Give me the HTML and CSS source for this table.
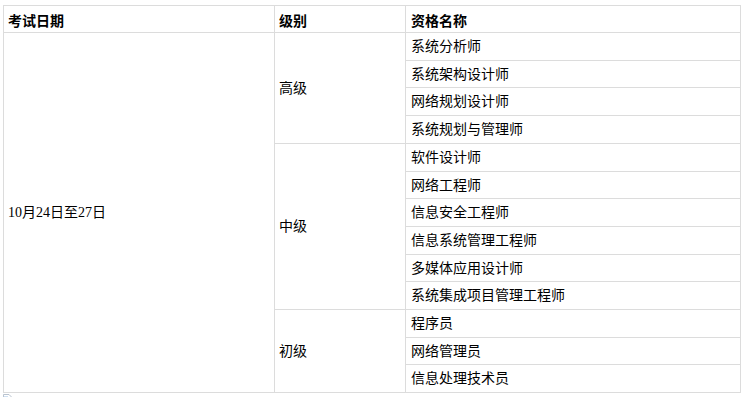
FILE: index.html
```html
<!DOCTYPE html>
<html lang="zh-CN">
<head>
<meta charset="utf-8">
<title>考试安排</title>
<link rel="stylesheet" href="styles.css">
</head>
<body>
<table class="exam">
  <colgroup>
    <col class="c1"><col class="c2"><col class="c3">
  </colgroup>
  <thead>
    <tr><th>考试日期</th><th>级别</th><th>资格名称</th></tr>
  </thead>
  <tbody>
    <tr><td rowspan="13">10月24日至27日</td><td rowspan="4">高级</td><td>系统分析师</td></tr>
    <tr><td>系统架构设计师</td></tr>
    <tr><td>网络规划设计师</td></tr>
    <tr><td>系统规划与管理师</td></tr>
    <tr><td rowspan="6">中级</td><td>软件设计师</td></tr>
    <tr><td>网络工程师</td></tr>
    <tr><td>信息安全工程师</td></tr>
    <tr><td>信息系统管理工程师</td></tr>
    <tr><td>多媒体应用设计师</td></tr>
    <tr><td>系统集成项目管理工程师</td></tr>
    <tr><td rowspan="3">初级</td><td>程序员</td></tr>
    <tr><td>网络管理员</td></tr>
    <tr><td>信息处理技术员</td></tr>
  </tbody>
</table>
<div class="broken">
  <svg width="10" height="6" viewBox="0 0 10 6"><path d="M0.5 6V0.5H6L8.5 3V6" fill="none" stroke="#b9c3cf"/><rect x="1" y="2" width="4" height="4" fill="#cfe0f2"/></svg>
</div>
</body>
</html>
```
FILE: styles.css
```css
html, body {
  margin: 0;
  padding: 0;
  background: #fff;
}
body {
  font-family: "Liberation Serif", "Noto Sans CJK SC", serif;
  font-size: 14px;
  color: #000;
}
.exam {
  border-collapse: collapse;
  margin: 5px 0 0 3px;
  width: 737px;
  table-layout: fixed;
}
.c1 { width: 271px; }
.c2 { width: 131px; }
.c3 { width: 335px; }
.exam th, .exam td {
  border: 1px solid #dcdcdc;
  padding: 4px 4px 2px;
  text-align: left;
  vertical-align: middle;
  font-weight: normal;
}
.exam th {
  font-weight: bold;
  line-height: 20px;
  font-family: "Noto Sans CJK SC", sans-serif;
}
.exam td {
  line-height: 20.7px;
}
.exam td:last-child, .exam th:last-child {
  padding-left: 5px;
}
.broken {
  display: flex;
  padding: 1px 0 0 3px;
  height: 6px;
  line-height: 0;
}
```
